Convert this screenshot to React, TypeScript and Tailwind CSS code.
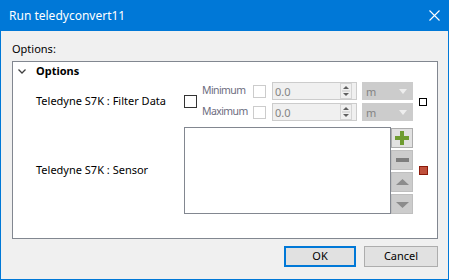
import React from "react";

function Checkbox({ disabled }: { disabled?: boolean }) {
  return (
    <div
      className={
        disabled
          ? "w-[13px] h-[13px] border border-[#cccccc] bg-white shrink-0"
          : "w-[13px] h-[13px] border border-[#333333] bg-white shrink-0"
      }
    />
  );
}

function Spin() {
  return (
    <div className="w-[85px] h-[18px] border border-[#cccccc] bg-[#f0f0f0] flex items-center justify-between pl-[2px] pr-[4px] shrink-0">
      <span className="text-[#838383] leading-none">0.0</span>
      <div className="w-[12px] h-[16px] border border-[#d4d4d4] flex flex-col items-center justify-center">
        <svg width="10" height="14" viewBox="0 0 10 14">
          <path d="M5 2 L8 5 L2 5 Z" fill="#606060" />
          <line x1="1" y1="7" x2="9" y2="7" stroke="#c8c8c8" />
          <path d="M2 9 L8 9 L5 12 Z" fill="#606060" />
        </svg>
      </div>
    </div>
  );
}

function Drop() {
  return (
    <div className="w-[51px] h-[18px] bg-[#cccccc] flex items-center justify-between pl-[4px] pr-[6px] shrink-0">
      <span className="text-[#838383] leading-none">m</span>
      <svg width="8" height="5" viewBox="0 0 8 5">
        <path d="M0 0 L8 0 L4 5 Z" fill="#eeeeee" />
      </svg>
    </div>
  );
}

function MinMaxLine({ label }: { label: string }) {
  return (
    <div className="h-[18px] flex items-center">
      <span className="w-[51px] shrink-0 text-[#6d6d80] text-[10.5px] tracking-[-0.6px]">{label}</span>
      <Checkbox disabled />
      <div className="w-[6px]" />
      <Spin />
      <div className="w-[5px]" />
      <Drop />
    </div>
  );
}

function ToolBtn({ children, active }: { children: React.ReactNode; active?: boolean }) {
  return (
    <div
      className={
        active
          ? "w-[22px] h-[20px] border border-[#adadad] bg-[#e1e1e1] flex items-center justify-center"
          : "w-[22px] h-[20px] border border-[#bfbfbf] bg-[#cccccc] flex items-center justify-center"
      }
    >
      {children}
    </div>
  );
}

export default function App() {
  return (
    <div
      className="w-[449px] h-[280px] border border-t-0 border-[#0078d7] bg-[#f0f0f0] flex flex-col text-[11px] text-black overflow-hidden"
      style={{ fontFamily: '"Noto Sans", "Open Sans", sans-serif' }}
    >
      <div className="h-[31px] bg-[#0078d7] flex items-center justify-between pl-[8px] pr-[8px] text-white shrink-0">
        <span className="text-[12px]">Run teledyconvert11</span>
        <svg width="11" height="11" viewBox="0 0 11 11">
          <path d="M0.5 0.5 L10.5 10.5 M10.5 0.5 L0.5 10.5" stroke="#ffffff" strokeWidth="1.1" />
        </svg>
      </div>
      <div className="pl-[11px] pr-[10px] flex flex-col">
        <div className="h-[16px] mt-[10px] leading-[16px]">Options:</div>
        <div className="mt-[4px] w-[426px] h-[178px] border border-[#828790] bg-white flex flex-col">
          <div className="h-[18px] flex items-center pl-[5px]">
            <svg width="8" height="5" viewBox="0 0 8 5" className="shrink-0">
              <path d="M0.5 0.5 L4 4 L7.5 0.5" stroke="#404040" strokeWidth="1.3" fill="none" />
            </svg>
            <span className="ml-[10px] font-bold">Options</span>
          </div>
          <div className="mt-[2px] h-[39px] flex items-center pl-[23px]">
            <span className="w-[148px] shrink-0">Teledyne S7K : Filter Data</span>
            <Checkbox />
            <div className="ml-[5px] flex flex-col gap-[3px]">
              <MinMaxLine label="Minimum" />
              <MinMaxLine label="Maximum" />
            </div>
            <div className="ml-[6px] w-[8px] h-[8px] border border-black bg-white" />
          </div>
          <div className="mt-[6px] h-[87px] flex items-center pl-[23px]">
            <span className="w-[148px] shrink-0">Teledyne S7K : Sensor</span>
            <div className="w-[207px] h-[87px] border border-[#828790] bg-white shrink-0" />
            <div className="h-[87px] flex flex-col gap-[2px] pt-[1px]">
              <ToolBtn active>
                <svg width="14" height="14" viewBox="0 0 14 14">
                  <path d="M5 0 H9 V5 H14 V9 H9 V14 H5 V9 H0 V5 H5 Z" fill="#6f9c31" />
                </svg>
              </ToolBtn>
              <ToolBtn>
                <svg width="13" height="4" viewBox="0 0 13 4">
                  <rect x="0" y="0" width="13" height="4" fill="#7d7d7d" />
                </svg>
              </ToolBtn>
              <ToolBtn>
                <svg width="13" height="7" viewBox="0 0 13 7">
                  <path d="M6.5 0 L13 6 L0 6 Z" fill="#8c8c8c" />
                </svg>
              </ToolBtn>
              <ToolBtn>
                <svg width="13" height="7" viewBox="0 0 13 7">
                  <path d="M0 1 L13 1 L6.5 7 Z" fill="#8c8c8c" />
                </svg>
              </ToolBtn>
            </div>
            <div className="ml-[6px] w-[9px] h-[9px] border border-[#8b1a0a] bg-[#c0503c]" />
          </div>
        </div>
        <div className="mt-[7px] flex justify-end gap-[8px]">
          <div className="w-[72px] h-[21px] border-2 border-[#0078d7] bg-[#e1e1e1] flex items-center justify-center">
            OK
          </div>
          <div className="w-[74px] h-[21px] border border-[#adadad] bg-[#e1e1e1] flex items-center justify-center">
            Cancel
          </div>
        </div>
      </div>
    </div>
  );
}
